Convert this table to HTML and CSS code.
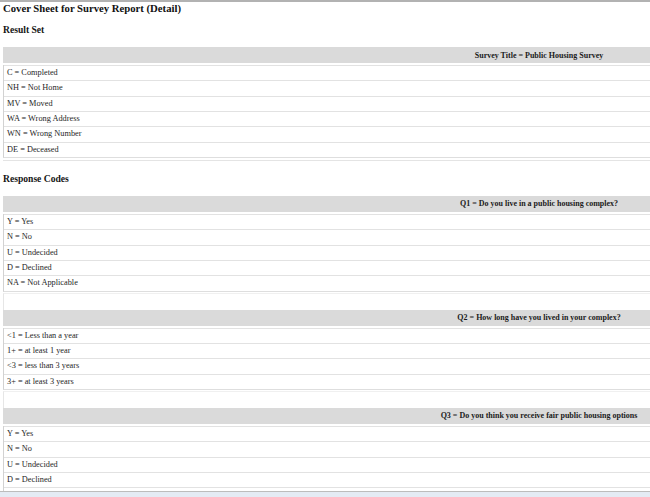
FILE: index.html
```html
<!DOCTYPE html>
<html lang="en">
<head>
<meta charset="utf-8">
<title>Cover Sheet for Survey Report (Detail)</title>
<link rel="stylesheet" href="styles.css">
</head>
<body>
<div class="topline"></div>
<h1 class="title">Cover Sheet for Survey Report (Detail)</h1>

<h2 class="section first">Result Set</h2>
<div class="table">
  <div class="thead"><div class="th-spacer"></div><div class="th">Survey Title = Public Housing Survey</div></div>
  <div class="rows">
    <div class="row">C = Completed</div>
    <div class="row">NH = Not Home</div>
    <div class="row">MV = Moved</div>
    <div class="row">WA = Wrong Address</div>
    <div class="row">WN = Wrong Number</div>
    <div class="row">DE = Deceased</div>
  </div>
  <div class="endline"></div>
</div>

<h2 class="section second">Response Codes</h2>
<div class="table">
  <div class="thead"><div class="th-spacer"></div><div class="th">Q1 = Do you live in a public housing complex?</div></div>
  <div class="rows">
    <div class="row">Y = Yes</div>
    <div class="row">N = No</div>
    <div class="row">U = Undecided</div>
    <div class="row">D = Declined</div>
    <div class="row">NA = Not Applicable</div>
  </div>
  <div class="spacer"></div>

  <div class="thead"><div class="th-spacer"></div><div class="th">Q2 = How long have you lived in your complex?</div></div>
  <div class="rows">
    <div class="row">&lt;1 = Less than a year</div>
    <div class="row">1+ = at least 1 year</div>
    <div class="row">&lt;3 = less than 3 years</div>
    <div class="row">3+ = at least 3 years</div>
  </div>
  <div class="spacer"></div>

  <div class="thead"><div class="th-spacer"></div><div class="th">Q3 = Do you think you receive fair public housing options</div></div>
  <div class="rows">
    <div class="row">Y = Yes</div>
    <div class="row">N = No</div>
    <div class="row">U = Undecided</div>
    <div class="row">D = Declined</div>
    <div class="row">NA = Not Applicable</div>
  </div>
</div>

<div class="statusbar"></div>
</body>
</html>
```

FILE: styles.css
```css
html, body {
  margin: 0;
  padding: 0;
  background: #ffffff;
  overflow: hidden;
}

body {
  font-family: "Liberation Serif", "Times New Roman", serif;
  color: #1e1e1e;
}

.topline {
  height: 2px;
  background: #b2b2b2;
}

.title {
  margin: 0;
  padding-left: 3px;
  font-size: 10.7px;
  line-height: 13px;
  font-weight: bold;
  color: #111;
}

.section {
  margin: 9px 0 11px 0;
  padding-left: 3px;
  font-size: 9.6px;
  line-height: 12px;
  font-weight: bold;
  color: #151515;
}

.section.second {
  margin-top: 12px;
}

.table {
  margin-left: 3px;
  display: flex;
  flex-direction: column;
}

.thead {
  display: flex;
  height: 16px;
  background: #dadada;
  align-items: center;
}

.th-spacer {
  flex: 1;
}

.th {
  width: 222px;
  text-align: center;
  font-size: 8px;
  font-weight: bold;
  color: #1a1a1a;
  white-space: nowrap;
}

.rows {
  margin-top: 2px;
  border-left: 1px solid #d2d2d2;
  border-bottom: 1px solid #dedede;
}

.row {
  box-sizing: border-box;
  height: 15.33px;
  border-top: 1px solid #e2e2e2;
  padding-left: 3px;
  font-size: 8.3px;
  line-height: 14px;
  color: #262626;
  white-space: nowrap;
}

.endline {
  margin-top: 2px;
  height: 1px;
  background: #e4e4e4;
}

.spacer {
  margin-top: 1px;
  height: 16px;
  border-left: 1px solid #e6e6e6;
  border-top: 1px solid #f0f0f0;
}

.statusbar {
  position: fixed;
  left: 0;
  right: 0;
  bottom: 0;
  height: 5px;
  border-top: 1px solid #bcbcbc;
  background: #e4ebf4;
}
```
